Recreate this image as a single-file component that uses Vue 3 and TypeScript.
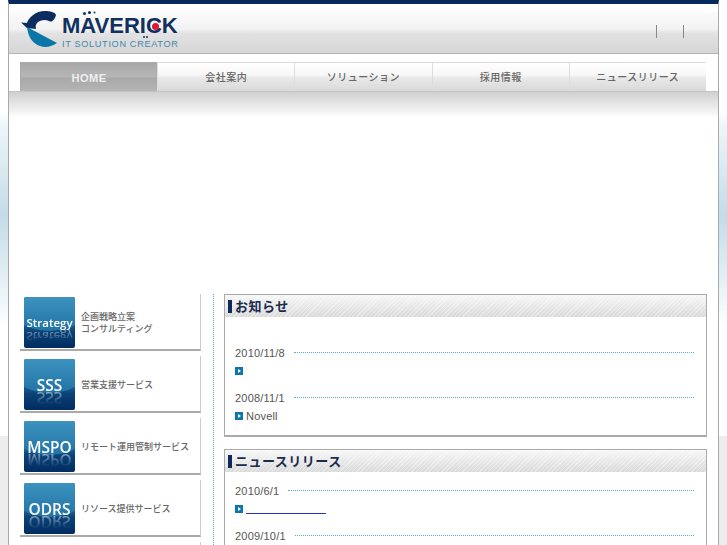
<script setup lang="ts">
const navItems = ['HOME', '会社案内', 'ソリューション', '採用情報', 'ニュースリリース']

const services = [
  { code: 'Strategy', lines: ['企画戦略立案', 'コンサルティング'], small: true },
  { code: 'SSS', lines: ['営業支援サービス'] },
  { code: 'MSPO', lines: ['リモート運用管制サービス'] },
  { code: 'ODRS', lines: ['リソース提供サービス'] },
  { code: '', lines: [] },
]

const notices = [
  { date: '2010/11/8', text: '' },
  { date: '2008/11/1', text: 'Novell' },
]
</script>

<template>
  <div class="page">
    <div class="frame">
      <header class="head">
        <div class="logo">
          <svg class="mark" width="36" height="37" viewBox="0 0 36 37">
            <path d="M5 15 C7 6 15 0 24 0 C29 0 34 1 35 4 C34 8 31 12 28 10 C24 8 20 9 17 11 C15 13 14 15 15 18 L6 17 Z" fill="#0b2c5e" />
            <path d="M0 11.500 L7 12 L6 17 Z" fill="#0b2c5e" />
            <path d="M6 16 L36 32 C30 36 24 37 19 35 C12 33 7 26 6 16 Z" fill="#0a77a8" />
          </svg>
          <div class="logo-text">
            <div class="brand">MAVERICK<i class="dot-red"></i><i class="dots"></i><i class="dots low"></i></div>
            <div class="tagline">IT SOLUTION CREATOR</div>
          </div>
        </div>
        <div class="head-links"><span></span><span></span></div>
      </header>

      <nav class="nav">
        <a v-for="(item, i) in navItems" :key="item" class="nav-item" :class="{ active: i === 0 }">{{ item }}</a>
      </nav>
      <div class="nav-shade"></div>

      <div class="hero"></div>

      <div class="columns">
        <aside class="side">
          <a v-for="s in services" :key="s.code" class="service">
            <div class="badge" :class="{ small: s.small }">
              <span v-if="s.code" class="code">{{ s.code }}</span>
            </div>
            <div class="service-label">
              <div v-for="l in s.lines" :key="l">{{ l }}</div>
            </div>
          </a>
        </aside>

        <main class="main">
          <section class="panel first">
            <h2 class="panel-title">お知らせ</h2>
            <div class="panel-body notices">
              <div v-for="n in notices" :key="n.date" class="entry">
                <div class="date-row">
                  <span>{{ n.date }}</span><i class="dots-line"></i>
                </div>
                <div class="entry-row">
                  <i class="bullet"></i><span>{{ n.text }}</span>
                </div>
              </div>
            </div>
          </section>

          <section class="panel">
            <h2 class="panel-title">ニュースリリース</h2>
            <div class="panel-body news">
              <div class="entry">
                <div class="date-row"><span>2010/6/1</span><i class="dots-line"></i></div>
                <div class="entry-row"><i class="bullet"></i><a class="blank-link"></a></div>
              </div>
              <div class="entry">
                <div class="date-row"><span>2009/10/1</span><i class="dots-line"></i></div>
              </div>
            </div>
          </section>
        </main>
      </div>
    </div>
  </div>
</template>

<style>
html, body {
  margin: 0;
  height: 100%;
  overflow: hidden;
}
</style>

<style scoped>
.page {
  height: 545px;
  overflow: hidden;
  background: linear-gradient(#fff 0, #fff 112px, #eef6fa 125px, #c3dce8 215px, #eef6fa 300px, #fafdfe 320px, #fff 325px, #fff 436px, #ededed 436px);
  font-family: "Liberation Sans", "Noto Sans CJK JP", sans-serif;
  color: #444;
}

.frame {
  width: 711px;
  margin-left: 8px;
  height: 545px;
  background: #fff;
  border-left: 1px solid #aaa;
  border-right: 1px solid #aaa;
  border-top: 4px solid #062a5e;
  box-sizing: border-box;
}

.head {
  height: 50px;
  box-sizing: border-box;
  padding-left: 12px;
  border-bottom: 1px solid #b5b5b5;
  border-top: 8px solid #fff;
  background: linear-gradient(#fbfbfb 0, #f2f2f2 42%, #e2e2e2 52%, #d6d6d6 100%);
  display: flex;
  justify-content: space-between;
}

.logo {
  display: flex;
  gap: 5px;
  align-items: flex-start;
  margin-top: -1px;
}

.logo-text {
  margin-top: 3px;
}

.brand {
  position: relative;
  font-size: 22px;
  line-height: 24px;
  font-weight: 700;
  color: #10315f;
}

.dot-red {
  position: absolute;
  left: 90px;
  top: 9px;
  width: 7px;
  height: 7px;
  border-radius: 50%;
  background: #e0182d;
}

.dots {
  position: absolute;
  left: 21px;
  top: -2px;
  width: 3px;
  height: 3px;
  border-radius: 50%;
  background: #10315f;
  box-shadow: 5px -1px 0 #10315f, 10px -1px 0 -0.5px #10315f;
}

.dots.low {
  left: 81px;
  top: 22px;
  width: 2px;
  height: 2px;
  box-shadow: 3px 0 0 #10315f;
}

.tagline {
  margin-top: 1px;
  font-size: 9.2px;
  line-height: 10px;
  letter-spacing: 0.65px;
  color: #3f86ad;
  white-space: nowrap;
}

.head-links {
  display: flex;
  gap: 26px;
  padding-right: 34px;
  padding-top: 13px;
}

.head-links span {
  width: 1px;
  height: 13px;
  background: #888;
}

.nav {
  display: flex;
  margin: 8px 0 0 11px;
  height: 29px;
  box-sizing: border-box;
}

.nav-item {
  width: 137.2px;
  box-sizing: border-box;
  border-top: 1px solid #ddd;
  border-left: 1px solid #ddd;
  background: linear-gradient(#fff 0, #f7f7f7 42%, #e8e8e8 55%, #d9d9d9 100%);
  font-size: 10px;
  font-weight: 500;
  line-height: 30px;
  text-align: center;
  color: #666;
  letter-spacing: 0.5px;
}

.nav-item.active {
  border-color: #aaa;
  background: linear-gradient(#a8a8a8 0, #b6b6b6 48%, #a9a9a9 55%, #b4b4b4 100%);
  color: #eee;
  font-size: 11px;
  font-weight: 700;
}

.nav-shade {
  height: 27px;
  border-top: 1px solid #c4c4c4;
  box-sizing: border-box;
  background: linear-gradient(#d0d0d0, #fff);
}

.hero {
  height: 176px;
}

.columns {
  display: grid;
  grid-template-columns: 181px 483px;
  gap: 23px;
  padding-left: 11px;
  height: 251px;
  overflow: hidden;
}

.side {
  display: flex;
  flex-direction: column;
  gap: 5px;
  position: relative;
}

.side::after {
  content: "";
  position: absolute;
  right: -13px;
  top: 0;
  bottom: 0;
  border-right: 1px dotted #55aedb;
}

.service {
  height: 57px;
  box-sizing: border-box;
  display: flex;
  align-items: center;
  gap: 6px;
  padding: 2px 0 0 4px;
  border-right: 1px solid #ccc;
  border-bottom: 2px solid #aaa;
  flex: none;
  font-size: 9px;
  font-weight: 500;
  line-height: 12px;
  color: #666;
}

.badge {
  position: relative;
  width: 51px;
  height: 51px;
  flex: none;
  border-radius: 2px;
  overflow: hidden;
  background: linear-gradient(#1b6a9e 50%, #0a4277 68%, #002c61 100%);
  text-align: center;
  color: #fff;
  font-family: "Open Sans", sans-serif;
  font-size: 15.5px;
  font-weight: 600;
  line-height: 16px;
}

.badge::before {
  content: "";
  position: absolute;
  left: -20px;
  right: -20px;
  top: -40px;
  height: 74px;
  border-radius: 50%;
  background: linear-gradient(#2a6f9f 0, #3b93be 54%, #2273a6 100%);
}

.badge.small {
  font-size: 11.5px;
}

.code {
  position: relative;
  display: block;
  margin-top: 18px;
  -webkit-box-reflect: below -3px linear-gradient(transparent 10%, rgba(255, 255, 255, 0.55));
}

.main {
  display: flex;
  flex-direction: column;
  gap: 12px;
}

.panel {
  border: 1px solid #aaa;
  border-bottom-width: 2px;
  box-sizing: border-box;
  flex: none;
}

.panel.first {
  height: 143px;
}

.panel-title {
  margin: 0;
  height: 22px;
  box-sizing: border-box;
  padding-left: 10px;
  font-size: 13px;
  line-height: 23px;
  font-weight: 700;
  color: #1a2c4e;
  letter-spacing: 0.5px;
  position: relative;
  background: repeating-linear-gradient(135deg, rgba(255, 255, 255, 0.35) 0 1px, transparent 1px 3px), linear-gradient(#f7f7f7, #d9d9d9);
}

.panel-title::before {
  content: "";
  position: absolute;
  left: 3px;
  top: 5px;
  width: 4px;
  height: 13px;
  background: #0d2a5a;
}

.panel-body {
  padding: 0 12px 0 10px;
  font-size: 11px;
  letter-spacing: 0.2px;
  color: #555;
}

.notices {
  padding-top: 29px;
}

.news {
  padding-top: 12px;
}

.entry {
  height: 45px;
}

.date-row {
  display: flex;
  align-items: center;
  gap: 9px;
  height: 13px;
  white-space: nowrap;
}

.dots-line {
  flex: 1;
  border-top: 1px dotted #55aedb;
}

.entry-row {
  display: flex;
  align-items: center;
  gap: 3px;
  height: 18px;
  margin-top: 3px;
}

.bullet {
  width: 8px;
  height: 8px;
  flex: none;
  background: #0b77ae;
  position: relative;
}

.bullet::after {
  content: "";
  position: absolute;
  left: 3px;
  top: 2px;
  border-left: 3px solid #fff;
  border-top: 2px solid transparent;
  border-bottom: 2px solid transparent;
}

.blank-link {
  display: block;
  width: 80px;
  height: 1px;
  margin-top: 9px;
  background: #2a2fd0;
}
</style>
